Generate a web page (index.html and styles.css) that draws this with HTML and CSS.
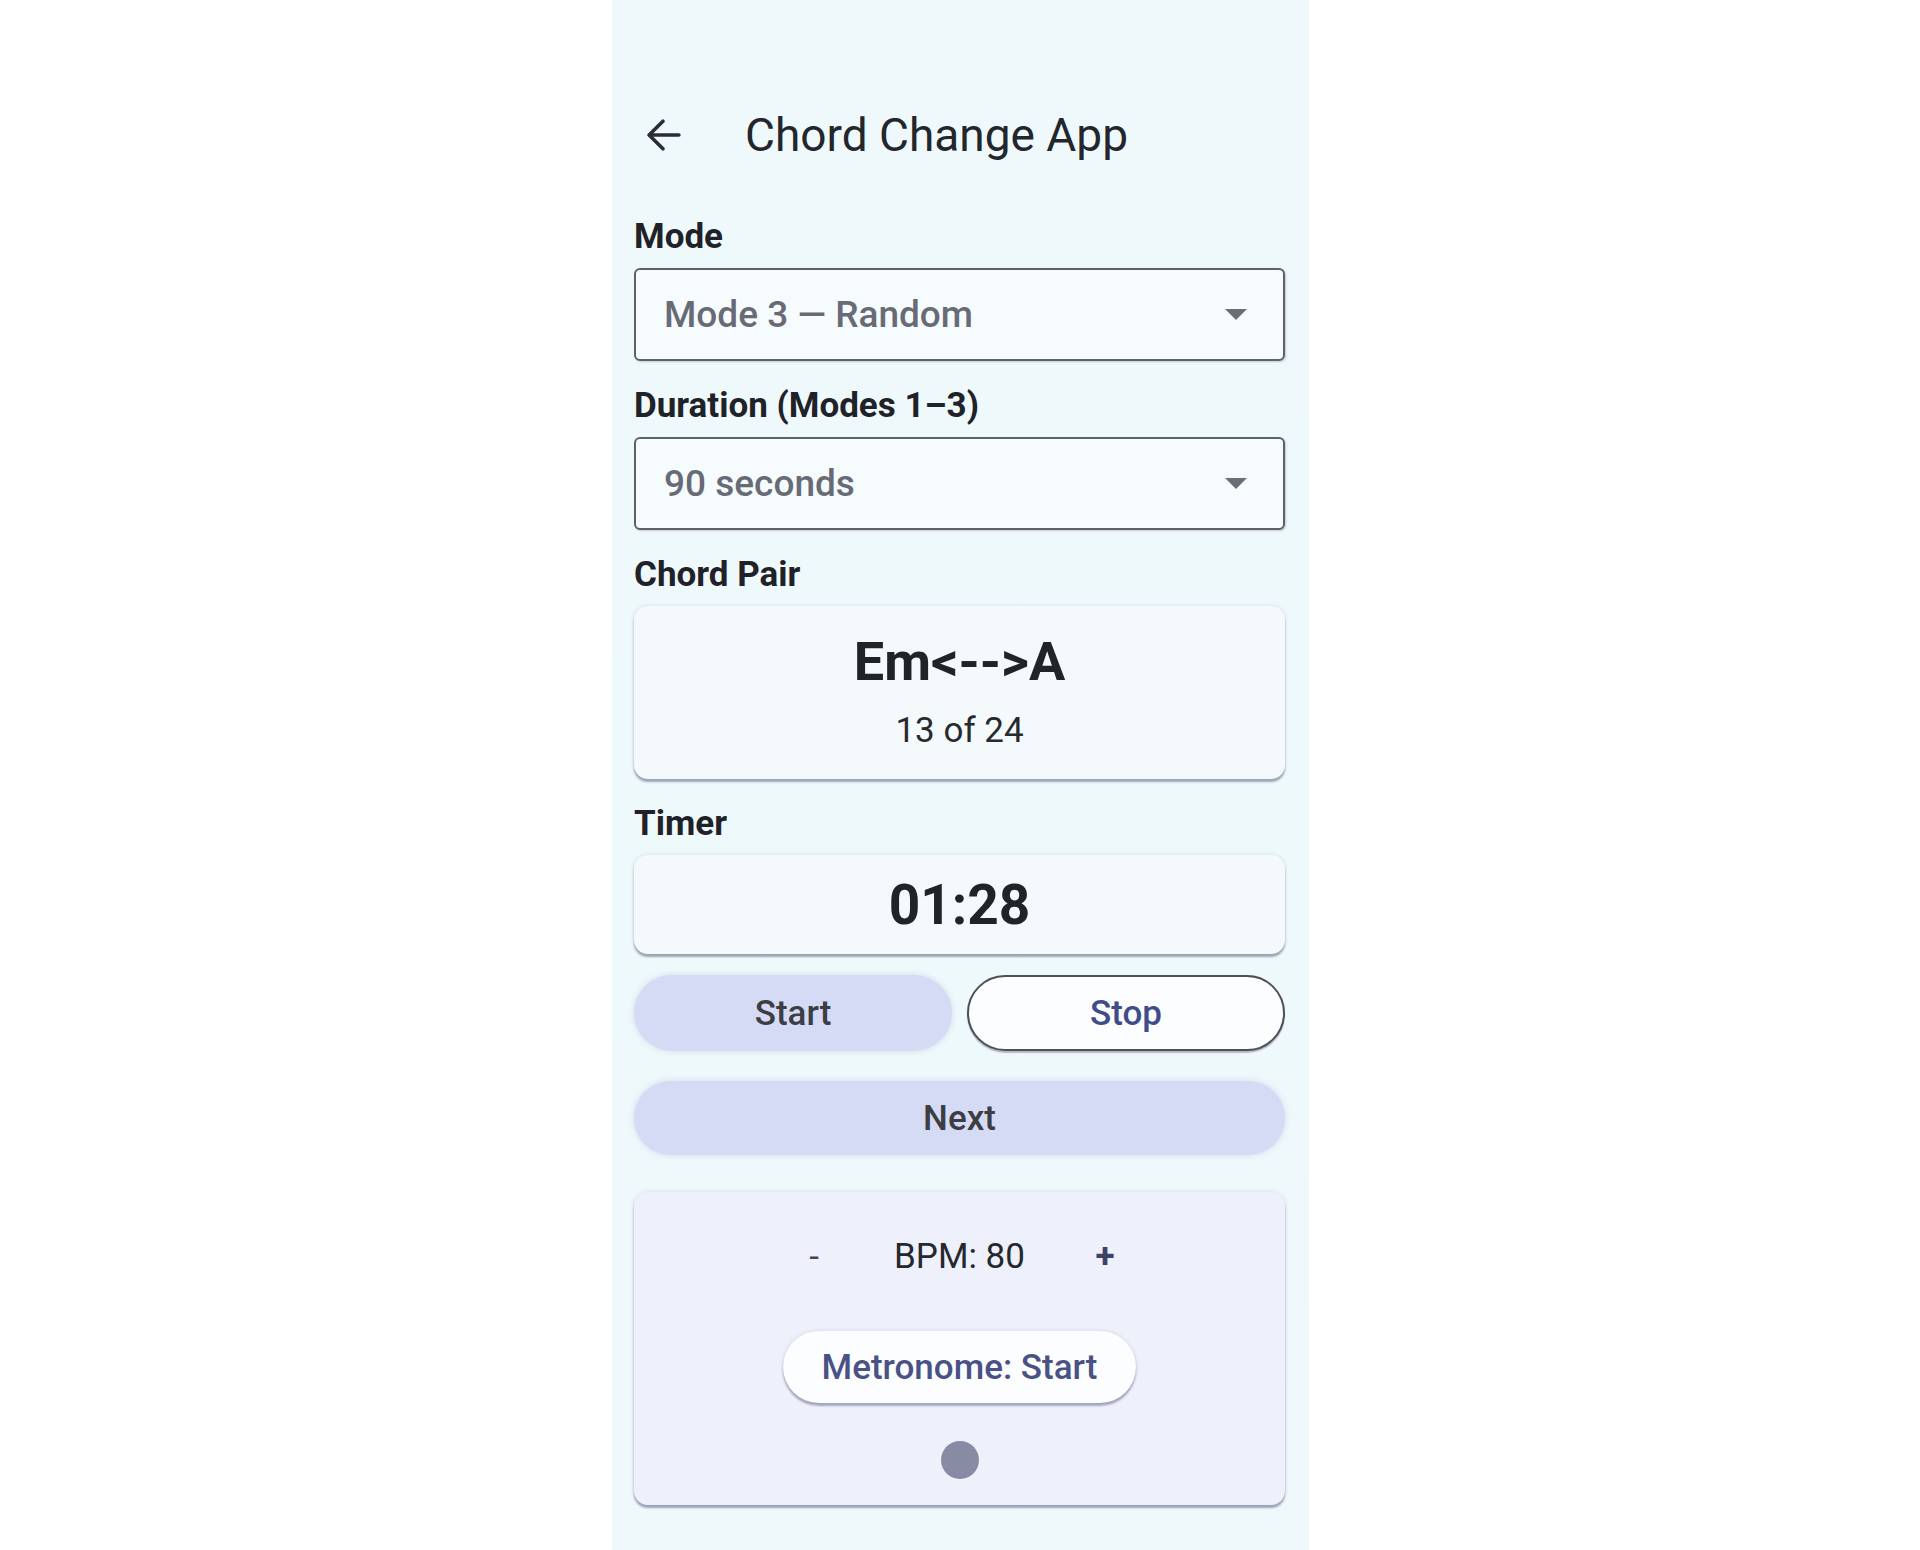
FILE: index.html
```html
<!DOCTYPE html>
<html lang="en">
<head>
  <meta charset="UTF-8" />
  <meta name="viewport" content="width=device-width, initial-scale=1.0" />
  <title>Chord Change App</title>
  <link rel="stylesheet" href="styles.css">
</head>
<body>
  <div class="phone">
    <header class="app-bar">
      <button class="back" type="button" aria-label="Back">
        <svg width="34" height="34" viewBox="4 4 16 16" fill="none" stroke="#2a2d33" stroke-width="1.7" stroke-linecap="round" stroke-linejoin="round">
          <path d="M19 12H5.5" />
          <path d="M11.5 5.5L5 12l6.5 6.5" />
        </svg>
      </button>
      <h1>Chord Change App</h1>
    </header>

    <div class="field">
      <label class="field-label">Mode</label>
      <div class="select">
        <span>Mode 3 — Random</span>
        <span class="caret"></span>
      </div>
    </div>

    <div class="field">
      <label class="field-label">Duration (Modes 1–3)</label>
      <div class="select">
        <span>90 seconds</span>
        <span class="caret"></span>
      </div>
    </div>

    <div class="field">
      <label class="field-label">Chord Pair</label>
      <div class="card chord-card">
        <div class="chord">Em&lt;--&gt;A</div>
        <div class="count">13 of 24</div>
      </div>
    </div>

    <div class="field">
      <label class="field-label">Timer</label>
      <div class="card timer-card">
        <div class="timer">01:28</div>
      </div>
    </div>

    <div class="btn-row">
      <button class="btn btn-filled" type="button">Start</button>
      <button class="btn btn-outline" type="button">Stop</button>
    </div>

    <button class="btn btn-filled btn-wide" type="button">Next</button>

    <div class="card metro-card">
      <div class="bpm-row">
        <span class="bpm-step minus">-</span>
        <span class="bpm">BPM: 80</span>
        <span class="bpm-step plus">+</span>
      </div>
      <button class="metro-btn" type="button">Metronome: Start</button>
      <span class="beat-dot"></span>
    </div>
  </div>
</body>
</html>
```

FILE: styles.css
```css
body {
  margin: 0;
  background: #ffffff;
  font-family: Roboto, "Liberation Sans", sans-serif;
  color: #1f2228;
}

.phone {
  width: 697px;
  min-height: 1550px;
  margin-left: 612px;
  padding: 95px 24px 0 22px;
  box-sizing: border-box;
  background: linear-gradient(180deg, #eff9fc 0%, #eef9fc 60%, #eff8fb 100%);
}

.app-bar {
  display: flex;
  align-items: center;
  height: 80px;
  margin-bottom: 42px;
}

.back {
  display: flex;
  align-items: center;
  background: none;
  border: none;
  padding: 0;
  margin-left: 13px;
  cursor: pointer;
}

h1 {
  margin: 0 0 0 64px;
  font-size: 46px;
  font-weight: 400;
  color: #23262c;
}

.field {
  display: flex;
  flex-direction: column;
  margin-bottom: 25px;
}

.field-label {
  font-size: 35px;
  font-weight: 700;
  line-height: 40px;
  margin-bottom: 11px;
  color: #1f2228;
}

.select {
  display: flex;
  align-items: center;
  justify-content: space-between;
  height: 93px;
  padding: 0 36px 0 28px;
  border: 2px solid #5f6168;
  border-radius: 6px;
  box-sizing: border-box;
  background: #f6fcfe;
  box-shadow: 1px 1px 2px rgba(60, 62, 90, 0.25);
  font-size: 37px;
  font-weight: 500;
  color: #686b76;
}

.caret {
  width: 0;
  height: 0;
  border-left: 11px solid transparent;
  border-right: 11px solid transparent;
  border-top: 11px solid #6b6e77;
}

.card {
  background: #f4f9fc;
  border-radius: 14px;
  box-shadow: 0 3px 2px rgba(70, 72, 110, 0.45), 0 0 4px rgba(90, 100, 140, 0.18);
}

.chord-card {
  height: 173px;
  display: flex;
  flex-direction: column;
  align-items: center;
  justify-content: center;
  gap: 19px;
  padding-bottom: 2px;
  box-sizing: border-box;
}

.chord {
  font-size: 54px;
  font-weight: 700;
  line-height: 60px;
  color: #202328;
}

.count {
  font-size: 35px;
  line-height: 40px;
  color: #26292e;
}

.timer-card {
  height: 99px;
  display: flex;
  align-items: center;
  justify-content: center;
}

.timer {
  font-size: 55px;
  font-weight: 700;
  color: #202328;
}

.btn-row {
  display: grid;
  grid-template-columns: 1fr 1fr;
  gap: 15px;
  margin-top: -4px;
  margin-bottom: 30px;
}

.btn {
  height: 76px;
  border-radius: 38px;
  font-family: Roboto, "Liberation Sans", sans-serif;
  font-size: 35px;
  font-weight: 500;
  cursor: pointer;
}

.btn-filled {
  background: #d5dbf5;
  border: none;
  color: #3c3e44;
  box-shadow: 0 0 6px rgba(150, 160, 200, 0.35);
}

.btn-outline {
  background: #fbfdff;
  border: 2px solid #4e5057;
  color: #404c88;
  box-shadow: 0 2px 1px rgba(70, 72, 100, 0.35);
}

.btn-wide {
  display: block;
  width: 100%;
  height: 74px;
  margin-bottom: 37px;
}

.metro-card {
  display: flex;
  flex-direction: column;
  align-items: center;
  padding: 39px 0 26px;
  background: #eef1fb;
}

.bpm-row {
  display: flex;
  align-items: center;
  justify-content: center;
  gap: 56px;
  height: 50px;
  font-size: 35px;
  color: #25282e;
}

.bpm-step {
  width: 48px;
  text-align: center;
  color: #3f4466;
}

.plus {
  font-weight: 700;
}

.metro-btn {
  margin-top: 50px;
  width: 353px;
  height: 72px;
  border: none;
  border-radius: 36px;
  background: #fbfdff;
  box-shadow: 0 3px 2px rgba(70, 72, 110, 0.4), 0 0 4px rgba(90, 100, 140, 0.2);
  font-family: Roboto, "Liberation Sans", sans-serif;
  font-size: 35px;
  font-weight: 500;
  color: #4a5285;
  cursor: pointer;
}

.beat-dot {
  margin-top: 38px;
  width: 38px;
  height: 38px;
  border-radius: 50%;
  background: #878ba4;
}
```
